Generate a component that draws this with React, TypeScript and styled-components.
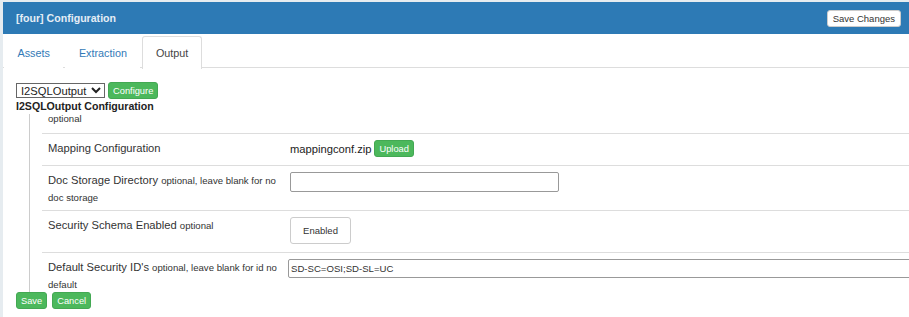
import styled, { createGlobalStyle } from 'styled-components'

const GlobalStyle = createGlobalStyle`
  html, body {
    margin: 0;
    padding: 0;
    background: #e6ecf0;
    font-family: "Liberation Sans", Arial, sans-serif;
    font-size: 11.2px;
    color: #333;
    overflow: hidden;
  }
`

const Page = styled.div`
  padding: 2px 0 0 3px;
`

const Panel = styled.div`
  background: #fff;
  width: 906px;
  height: 330px;
  overflow: hidden;
`

const Header = styled.div`
  background: #2d7ab5;
  height: 32px;
  display: flex;
  align-items: center;
  justify-content: space-between;
  padding: 0 8px 0 13px;
`

const Title = styled.div`
  color: #e4edf6;
  font-weight: bold;
  font-size: 10.6px;
`

const WhiteButton = styled.button`
  font-family: inherit;
  font-size: 9.5px;
  color: #333;
  background: #fff;
  border: 1px solid #ccc;
  border-radius: 3px;
  padding: 0 5px;
  height: 17px;
`

const Tabs = styled.div`
  display: flex;
  border-bottom: 1px solid #ddd;
  height: 34px;
  padding: 2px 0 0 1px;
  box-sizing: border-box;
`

const Tab = styled.div<{ $active?: boolean }>`
  padding: 0 12.5px;
  display: flex;
  align-items: center;
  font-size: 10.8px;
  color: ${p => (p.$active ? '#444' : '#337ab7')};
  background: #fff;
  border: 1px solid ${p => (p.$active ? '#ddd' : 'transparent')};
  border-bottom: none;
  border-radius: 3px 3px 0 0;
  margin-bottom: -1px;
  height: 33px;
  box-sizing: border-box;
  margin-right: 2px;
`

const Body = styled.div`
  padding: 14px 0 0 13px;
`

const Toolbar = styled.div`
  display: flex;
  align-items: center;
  gap: 3px;
  height: 17px;
`

const Select = styled.select`
  font-family: inherit;
  font-size: 11.2px;
  height: 15px;
  width: 89px;
  padding: 0;
  border: 1px solid #666;
  border-radius: 0;
  color: #222;
  background: #fff;
`

const GreenButton = styled.button`
  font-family: inherit;
  font-size: 9.3px;
  color: #fff;
  background: #4cb85c;
  border: 1px solid #43a853;
  border-radius: 3px;
  padding: 0 4px;
  height: 17px;
`

const SectionTitle = styled.div`
  font-weight: bold;
  font-size: 10.6px;
  color: #222;
  line-height: 15px;
`

const Tree = styled.div`
  margin-left: 13px;
  border-left: 1px solid #ccc;
  padding-left: 12px;
`

const Optional = styled.span`
  font-size: 9.6px;
  color: #333;
`

const Hint = styled.div`
  padding-left: 6px;
  height: 19px;
  line-height: 9px;
`

const Row = styled.div<{ $h: number }>`
  display: flex;
  border-top: 1px solid #ddd;
  height: ${p => p.$h}px;
  box-sizing: border-box;
`

const Label = styled.div`
  width: 248px;
  flex: none;
  box-sizing: border-box;
  padding: 6px 12px 0 6px;
  line-height: 16px;
  color: #333;
`

const Value = styled.div<{ $left?: number }>`
  padding-top: 6px;
  margin-left: ${p => p.$left ?? 0}px;
  display: flex;
  align-items: flex-start;
  gap: 3px;
  flex: 1;
  color: #222;
`

const FileName = styled.span`
  line-height: 17px;
  margin-top: 1px;
`

const TextInput = styled.input<{ $w: number; $h?: number }>`
  font-family: inherit;
  font-size: 9.6px;
  color: #333;
  width: ${p => p.$w}px;
  height: ${p => p.$h ?? 20}px;
  box-sizing: border-box;
  border: 1px solid #999;
  border-radius: 2px;
  padding: 1px 2px;
  flex: none;
`

const ToggleButton = styled.button`
  font-family: inherit;
  font-size: 9.5px;
  color: #333;
  background: #fff;
  border: 1px solid #ccc;
  border-radius: 3px;
  width: 61px;
  height: 27px;
`

const Actions = styled.div`
  display: flex;
  gap: 5px;
`

export default function App() {
  return (
    <>
      <GlobalStyle />
      <Page>
        <Panel>
          <Header>
            <Title>[four] Configuration</Title>
            <WhiteButton>Save Changes</WhiteButton>
          </Header>
          <Tabs>
            <Tab>Assets</Tab>
            <Tab>Extraction</Tab>
            <Tab $active>Output</Tab>
          </Tabs>
          <Body>
            <Toolbar>
              <Select defaultValue="I2SQLOutput">
                <option>I2SQLOutput</option>
              </Select>
              <GreenButton>Configure</GreenButton>
            </Toolbar>
            <SectionTitle>I2SQLOutput Configuration</SectionTitle>
            <Tree>
              <Hint>
                <Optional>optional</Optional>
              </Hint>
              <Row $h={32}>
                <Label>Mapping Configuration</Label>
                <Value>
                  <FileName>mappingconf.zip</FileName>
                  <GreenButton>Upload</GreenButton>
                </Value>
              </Row>
              <Row $h={45}>
                <Label>
                  Doc Storage Directory <Optional>optional, leave blank for no doc storage</Optional>
                </Label>
                <Value>
                  <TextInput $w={269} />
                </Value>
              </Row>
              <Row $h={42}>
                <Label>
                  Security Schema Enabled <Optional>optional</Optional>
                </Label>
                <Value>
                  <ToggleButton>Enabled</ToggleButton>
                </Value>
              </Row>
              <Row $h={40}>
                <Label>
                  Default Security ID's <Optional>optional, leave blank for id no default</Optional>
                </Label>
                <Value $left={-2}>
                  <TextInput $w={640} $h={19} defaultValue="SD-SC=OSI;SD-SL=UC" />
                </Value>
              </Row>
            </Tree>
            <Actions>
              <GreenButton>Save</GreenButton>
              <GreenButton>Cancel</GreenButton>
            </Actions>
          </Body>
        </Panel>
      </Page>
    </>
  )
}
